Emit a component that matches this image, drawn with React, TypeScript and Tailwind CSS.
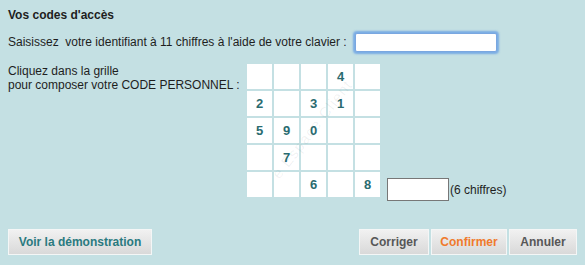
import React from "react";

const grid: string[][] = [
  ["", "", "", "4", ""],
  ["2", "", "3", "1", ""],
  ["5", "9", "0", "", ""],
  ["", "7", "", "", ""],
  ["", "", "6", "", "8"],
];

const btn =
  "h-[26px] border border-[#f4f6f6] bg-gradient-to-b from-[#f1f1f1] to-[#d9d9d9] text-[12px] font-bold";

export default function App() {
  return (
    <div
      className="w-[585px] h-[265px] bg-[#c4e0e3] text-[#1e1e1e] px-2 flex flex-col"
      style={{ fontFamily: '"Liberation Sans", Arial, sans-serif' }}
    >
      {/* Title */}
      <div className="pt-[8px] text-[12px] leading-[14px] font-bold">Vos codes d'accès</div>

      {/* Identifiant */}
      <div className="mt-[10px] flex items-center h-[20px]">
        <span className="w-[347px] text-[12px] whitespace-pre">
          Saisissez  votre identifiant à 11 chiffres à l'aide de votre clavier :
        </span>
        <input
          type="text"
          className="w-[142px] h-[19px] bg-white border border-[#7aa7e0] rounded-[2px] shadow-[0_0_2px_2px_rgba(90,150,230,0.7)] outline-none"
        />
      </div>

      {/* Code personnel */}
      <div className="mt-[12px] flex items-end">
        <div className="w-[239px] self-start text-[12px] leading-[14px]">
          Cliquez dans la grille
          <br />
          pour composer votre CODE PERSONNEL :
        </div>
        <div className="relative overflow-hidden">
          <div className="grid grid-cols-5 gap-[2px]">
            {grid.flat().map((d, i) => (
              <div
                key={i}
                className="w-[25px] h-[25px] bg-white flex items-center justify-center text-[13px] font-bold text-[#2a6b70] cursor-pointer"
              >
                {d}
              </div>
            ))}
          </div>
          {/* faint watermark */}
          <svg
            className="pointer-events-none absolute inset-0"
            width="133"
            height="133"
            aria-hidden="true"
          >
            <text
              x="66"
              y="70"
              textAnchor="middle"
              transform="rotate(-52 66 66)"
              fontSize="15"
              fill="rgba(40,70,80,0.07)"
              letterSpacing="1"
            >
              e Espace Client
            </text>
          </svg>
        </div>
        <div className="ml-[7px] mb-[-4px] flex items-center">
          <input
            type="password"
            className="w-[62px] h-[23px] bg-white border border-[#777] outline-none"
          />
          <span className="ml-[1px] text-[12px]">(6 chiffres)</span>
        </div>
      </div>

      {/* Buttons */}
      <div className="mt-[32px] flex items-center">
        <button className={`${btn} w-[144px] text-[#2a7a7f]`}>Voir la démonstration</button>
        <div className="ml-auto flex gap-[2px]">
          <button className={`${btn} w-[70px] text-[#575757]`}>Corriger</button>
          <button className={`${btn} w-[76px] text-[#f07a2c]`}>Confirmer</button>
          <button className={`${btn} w-[68px] text-[#575757]`}>Annuler</button>
        </div>
      </div>
    </div>
  );
}
